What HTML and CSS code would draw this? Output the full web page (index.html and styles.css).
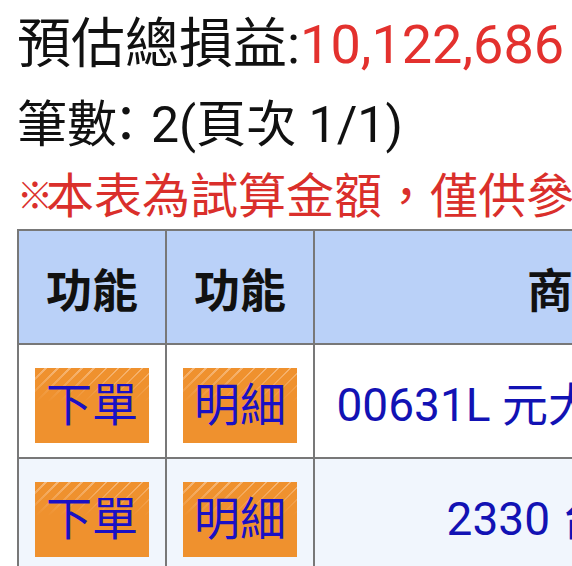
FILE: index.html
```html
<!DOCTYPE html>
<html lang="zh-Hant">
<head>
<meta charset="utf-8">
<title>預估總損益</title>
<link rel="stylesheet" href="styles.css">
</head>
<body>
<div class="page">
  <div class="summary">預估總損益:<span class="profit">10,122,686</span></div>
  <div class="count">筆數<span class="colon">：</span>2(頁次 1/1)</div>
  <div class="notice"><span class="mark">※</span>本表為試算金額，僅供參考</div>
  <div class="table-wrap">
    <table class="grid">
      <thead>
        <tr>
          <th class="c-fn">功能</th>
          <th class="c-fn">功能</th>
          <th class="c-name">商品</th>
        </tr>
      </thead>
      <tbody>
        <tr class="odd">
          <td class="c-fn"><span class="btn">下單</span></td>
          <td class="c-fn"><span class="btn">明細</span></td>
          <td class="c-name">00631L 元大台灣50正2</td>
        </tr>
        <tr class="even">
          <td class="c-fn"><span class="btn">下單</span></td>
          <td class="c-fn"><span class="btn">明細</span></td>
          <td class="c-name">2330 台積電</td>
        </tr>
      </tbody>
    </table>
  </div>
</div>
</body>
</html>
```

FILE: styles.css
```css
html, body {
  margin: 0;
  padding: 0;
  overflow: hidden;
  background: #ffffff;
}

.page {
  font-family: Roboto, "Noto Sans CJK TC", sans-serif;
  color: #111111;
  padding: 5px 0 0 17px;
  width: 1200px;
}

.summary {
  font-size: 54px;
  line-height: 80px;
  height: 80px;
  white-space: nowrap;
}

.profit {
  color: #e3312e;
}

.count {
  font-size: 50px;
  line-height: 80px;
  height: 80px;
  white-space: nowrap;
}

.colon {
  margin-left: -16px;
}

.notice {
  font-size: 48px;
  line-height: 64px;
  height: 64px;
  color: #da2f2b;
  white-space: nowrap;
}

.mark {
  display: inline-block;
  width: 29px;
  font-size: 36px;
  vertical-align: 4px;
}

.table-wrap {
  width: 1200px;
}

.grid {
  border-collapse: collapse;
  table-layout: fixed;
}

.grid th,
.grid td {
  border: 2px solid #787878;
  padding: 0;
  height: 112px;
  text-align: center;
  vertical-align: middle;
}

.grid th {
  background: #bad1f8;
  font-size: 46px;
  font-weight: 700;
  color: #111111;
}

.c-fn {
  width: 146px;
}

.c-name {
  width: 516px;
  font-size: 46px;
  color: #1212b4;
  white-space: nowrap;
}

.grid th.c-name {
  color: #111111;
}

.odd td {
  background: #ffffff;
}

.even td {
  background: #f1f6fd;
}

.btn {
  display: inline-block;
  width: 114px;
  height: 75px;
  line-height: 75px;
  font-size: 46px;
  color: #1a10c4;
  background-color: #ef912e;
  background-image:
    linear-gradient(to bottom, rgba(239, 145, 46, 0) 0%, rgba(239, 145, 46, 0.6) 25%, #ef912e 45%),
    repeating-linear-gradient(135deg, #ef912e 0px, #ef912e 7px, #f6b777 7px, #f6b777 8.5px);
  vertical-align: middle;
  margin-top: 8px;
}
```
